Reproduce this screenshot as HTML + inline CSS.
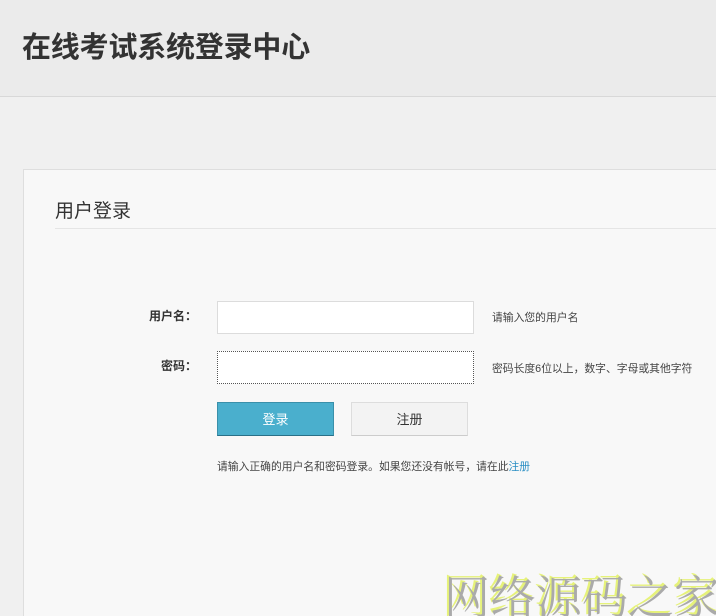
<!DOCTYPE html>
<html><head><meta charset="utf-8"><style>
html,body{margin:0;width:716px;height:616px;overflow:hidden}
body{background:#f0f0f0;font-family:"Liberation Sans","Noto Sans CJK SC",sans-serif;position:relative}
.hd{position:absolute;left:0;top:0;width:716px;height:96px;background:#ebebeb;border-bottom:1px solid #d8d8d8}
.hd h1{position:absolute;left:22px;top:28px;margin:0;font-size:29px;font-weight:bold;color:#333;line-height:40px;letter-spacing:-0.2px;white-space:nowrap}
.box{position:absolute;left:23px;top:169px;width:700px;height:447px;background:#f8f8f8;border:1px solid #dedede;border-bottom:none;overflow:hidden}
.t{position:absolute;left:31px;top:29px;font-size:19px;color:#333;line-height:26px}
.line{position:absolute;left:31px;top:58px;width:680px;height:1px;background:#e5e5e5}
.lb{position:absolute;font-size:12px;font-weight:bold;color:#333;text-align:right;width:60px}
.in{position:absolute;left:193px;width:255px;height:31px;background:#fff;border:1px solid #dcdcdc}
.hint{position:absolute;left:468px;font-size:10.8px;color:#444;white-space:nowrap}
.btn{position:absolute;top:232px;width:117px;height:34px;font-size:13px;text-align:center;line-height:34px;box-sizing:border-box}
.w{position:absolute;font-size:46px;color:#aaa;text-shadow:-2px -2px 0 #e6f27a;font-family:"Noto Serif CJK SC",serif;line-height:50px;white-space:nowrap}
</style></head><body>
<div class="hd"><h1>在线考试系统登录中心</h1></div>
<div class="box">
<div class="t">用户登录</div><div class="line"></div>
<div class="lb" style="left:113px;top:137px">用户名：</div>
<div class="in" style="top:131px"></div>
<div class="hint" style="top:139px">请输入您的用户名</div>
<div class="lb" style="left:113px;top:187px">密码：</div>
<div class="in" style="top:181px;border:1px dotted #555"></div>
<div class="hint" style="top:190px">密码长度6位以上，数字、字母或其他字符</div>
<div class="btn" style="left:193px;background:#4aafcd;color:#fff;border:1px solid #3a90aa;border-bottom-color:#2a7088">登录</div>
<div class="btn" style="left:327px;background:#f3f3f3;color:#333;border:1px solid #ddd;border-bottom-color:#ccc">注册</div>
<div style="position:absolute;left:193px;top:288px;font-size:10.8px;color:#444;white-space:nowrap">请输入正确的用户名和密码登录。如果您还没有帐号，请在此<span style="color:#2a8fc4">注册</span></div>
</div>
<div class="w" style="left:444px;top:570px">网络源码之家</div>
</body></html>
